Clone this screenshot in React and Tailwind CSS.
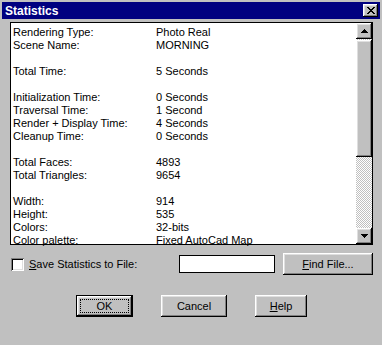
import React from "react";

const raised =
  "bg-[#c0c0c0] shadow-[inset_-1px_-1px_#000,inset_1px_1px_#fff,inset_-2px_-2px_#808080,inset_2px_2px_#dfdfdf]";

const rows = [
  ["Rendering Type:", "Photo Real"],
  ["Scene Name:", "MORNING"],
  null,
  ["Total Time:", "5 Seconds"],
  null,
  ["Initialization Time:", "0 Seconds"],
  ["Traversal Time:", "1 Second"],
  ["Render + Display Time:", "4 Seconds"],
  ["Cleanup Time:", "0 Seconds"],
  null,
  ["Total Faces:", "4893"],
  ["Total Triangles:", "9654"],
  null,
  ["Width:", "914"],
  ["Height:", "535"],
  ["Colors:", "32-bits"],
  ["Color palette:", "Fixed AutoCad Map"],
];

function Arrow({ down }) {
  return (
    <svg width="7" height="4" viewBox="0 0 7 4" className={down ? "rotate-180" : ""}>
      <path d="M3 0h1v1h1v1h1v1h1v1H0V3h1V2h1V1h1z" fill="#000" />
    </svg>
  );
}

function Button({ children, width, isDefault }) {
  if (isDefault) {
    return (
      <div className={`h-[22px] ${width} border border-black`}>
        <div className={`h-full w-full ${raised} p-[3px]`}>
          <div className="h-full w-full border border-dotted border-black flex items-center justify-center">
            {children}
          </div>
        </div>
      </div>
    );
  }
  return (
    <div className={`h-[22px] ${width} ${raised} flex items-center justify-center`}>{children}</div>
  );
}

export default function App() {
  return (
    <div
      className="w-[382px] h-[345px] bg-[#c0c0c0] p-[2px] text-[11px] text-black overflow-hidden"
      style={{ fontFamily: '"Liberation Sans", Arial, sans-serif' }}
    >
      {/* Title bar */}
      <div className="h-[17px] bg-[#000080] flex items-center justify-between pl-[3px] pr-[2px]">
        <span className="text-white font-bold text-[12px] leading-none">Statistics</span>
        <div className={`w-[15px] h-[13px] ${raised} flex items-center justify-center`}>
          <svg width="8" height="7" viewBox="0 0 8 7">
            <path
              d="M0 0h2v1h1v1h2V1h1V0h2v1H7v1H6v1H5v1h1v1h1v1h1v1H6V6H5V5H3v1H2v1H0V6h1V5h1V4h1V3H2V2H1V1H0z"
              fill="#000"
            />
          </svg>
        </div>
      </div>

      {/* Stats list */}
      <div className="mt-[3px] ml-[8px] w-[363px] h-[223px] border border-black bg-white flex">
        <div className="flex-1 pt-[3px] pl-[2px]">
          {rows.map((r, i) =>
            r ? (
              <div key={i} className="flex h-[13px] leading-[13px] whitespace-nowrap">
                <span className="w-[143px]">{r[0]}</span>
                <span>{r[1]}</span>
              </div>
            ) : (
              <div key={i} className="h-[13px]" />
            )
          )}
        </div>
        <div className="w-[16px] flex flex-col">
          <div className={`h-[16px] ${raised} flex items-center justify-center`}>
            <Arrow />
          </div>
          <div className="h-[1px] bg-[repeating-conic-gradient(#c0c0c0_0_25%,#fff_0_50%)] bg-[length:2px_2px]" />
          <div className={`h-[117px] ${raised}`} />
          <div className="flex-1 bg-[repeating-conic-gradient(#c0c0c0_0_25%,#fff_0_50%)] bg-[length:2px_2px]" />
          <div className={`h-[16px] ${raised} flex items-center justify-center`}>
            <Arrow down />
          </div>
        </div>
      </div>

      {/* Save to file row */}
      <div className="mt-[8px] h-[22px] flex items-center">
        <div className="ml-[9px] w-[13px] h-[13px] bg-white shadow-[inset_1px_1px_#808080,inset_-1px_-1px_#fff,inset_2px_2px_#000,inset_-2px_-2px_#dfdfdf]" />
        <span className="ml-[5px]">
          <span className="underline">S</span>ave Statistics to File:
        </span>
        <div className="ml-auto w-[96px] h-[18px] bg-white border border-black" />
        <div className="ml-[8px] mr-[7px]">
          <Button width="w-[90px]">
            <span>
              <span className="underline">F</span>ind File...
            </span>
          </Button>
        </div>
      </div>

      {/* Dialog buttons */}
      <div className="mt-[20px] flex">
        <div className="ml-[74px]">
          <Button width="w-[57px]" isDefault>
            OK
          </Button>
        </div>
        <div className="ml-[28px]">
          <Button width="w-[66px]">Cancel</Button>
        </div>
        <div className="ml-[28px]">
          <Button width="w-[52px]">
            <span>
              <span className="underline">H</span>elp
            </span>
          </Button>
        </div>
      </div>
    </div>
  );
}
